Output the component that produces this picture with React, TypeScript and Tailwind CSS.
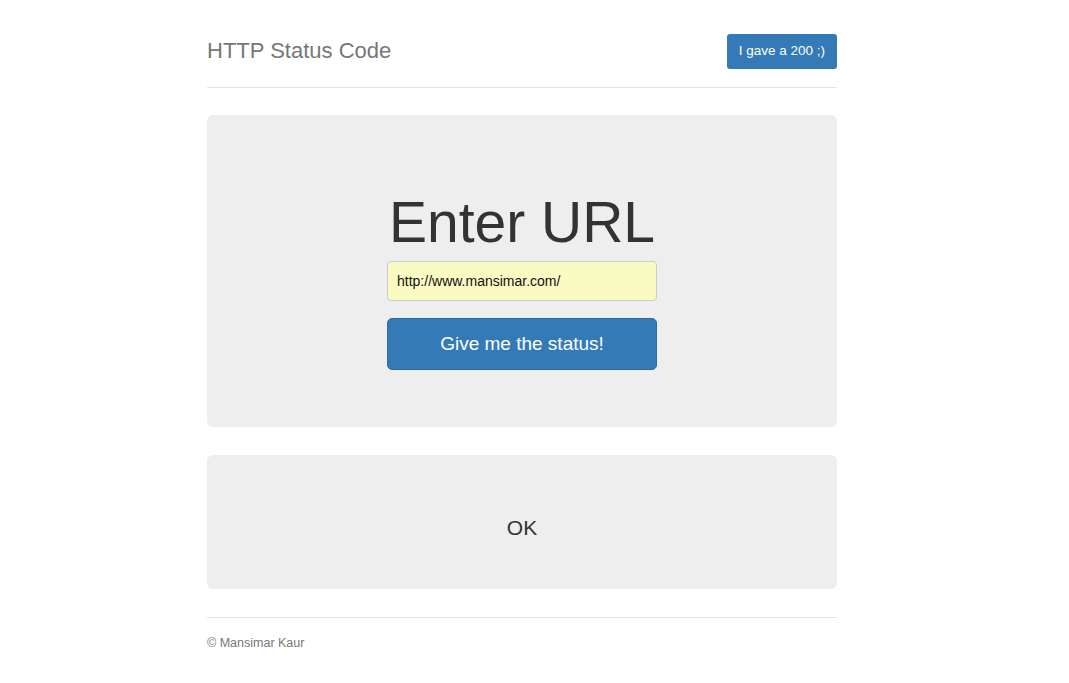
import React from 'react'

const App = () => {
  return (
    <div className="min-h-[683px] w-full bg-white text-[#333]" style={{ fontFamily: '"Liberation Sans", Arial, sans-serif' }}>
      <div className="ml-[207px] w-[630px] pt-[34px]">
        <div className="flex h-[54px] items-start justify-between border-b border-[#e5e5e5]">
          <h3 className="mt-[5px] text-[22px] leading-[24px] text-[#777]">HTTP Status Code</h3>
          <button className="h-[35px] rounded-[3px] bg-[#337ab7] px-[12px] text-[13.5px] text-white">
            I gave a 200 ;)
          </button>
        </div>

        <div className="mt-[27px] flex h-[312px] flex-col items-center rounded-[6px] bg-[#eee] pt-[72px]">
          <h1 className="text-[57px] leading-[70px] text-[#333]">Enter URL</h1>
          <input
            className="mt-[4px] h-[40px] w-[270px] rounded-[4px] border border-[#ccc] bg-[#fafac3] px-[9px] text-[14px] text-[#111] outline-none"
            defaultValue="http://www.mansimar.com/"
          />
          <button className="mt-[17px] h-[52px] w-[270px] rounded-[5px] border border-[#2e6da4] bg-[#337ab7] text-[19px] text-white">
            Give me the status!
          </button>
        </div>

        <div className="mt-[28px] flex h-[134px] items-center justify-center rounded-[6px] bg-[#eee] pt-[12px]">
          <span className="text-[21px] text-[#333]">OK</span>
        </div>

        <div className="mt-[28px] border-t border-[#e5e5e5] pt-[17px]">
          <p className="text-[12.5px] leading-[16px] text-[#777]">© Mansimar Kaur</p>
        </div>
      </div>
    </div>
  )
}

export default App
